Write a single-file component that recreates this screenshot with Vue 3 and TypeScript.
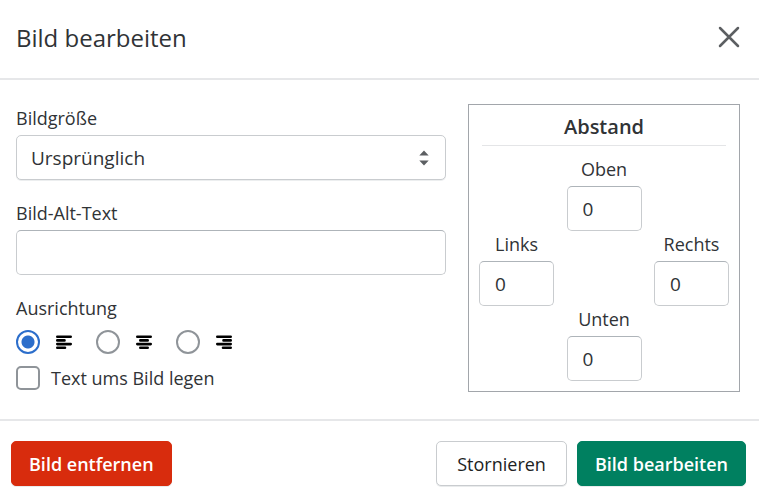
<script setup lang="ts">
import { reactive } from 'vue'

type Align = 'left' | 'center' | 'right'
type Side = 'top' | 'left' | 'right' | 'bottom'

const form = reactive({
  size: 'original',
  alt: '',
  align: 'left' as Align,
  wrap: false,
  spacing: { top: '0', left: '0', right: '0', bottom: '0' } as Record<Side, string>,
})

const alignments: { value: Align; label: string; path: string }[] = [
  { value: 'left', label: 'Links', path: 'M1.3 1.8H14.7M1.3 5.4H8.5M1.3 9.1H14.7M1.3 12.8H9' },
  { value: 'center', label: 'Zentriert', path: 'M1.3 1.8H14.7M4.3 5.4H11.7M1.3 9.1H14.7M4.3 12.8H11.7' },
  { value: 'right', label: 'Rechts', path: 'M1.3 1.8H14.7M7.5 5.4H14.7M1.3 9.1H14.7M7 12.8H14.7' },
]

const sides: { key: Side; label: string }[] = [
  { key: 'top', label: 'Oben' },
  { key: 'left', label: 'Links' },
  { key: 'right', label: 'Rechts' },
  { key: 'bottom', label: 'Unten' },
]
</script>

<template>
  <form class="dialog" role="dialog" aria-labelledby="dialog-title" @submit.prevent>
    <header class="header">
      <h2 id="dialog-title" class="title">Bild bearbeiten</h2>
      <button type="button" class="close" aria-label="Schließen">
        <svg viewBox="0 0 22 22" width="22" height="22" aria-hidden="true">
          <path d="M2 2L20 20M20 2L2 20" fill="none" stroke="#5c5f62" stroke-width="2.5" stroke-linecap="round" />
        </svg>
      </button>
    </header>

    <div class="body">
      <div class="fields">
        <div class="field">
          <label for="size">Bildgröße</label>
          <div class="select-wrap">
            <select id="size" v-model="form.size" class="control">
              <option value="original">Ursprünglich</option>
            </select>
            <svg class="arrows" viewBox="0 0 10 16" width="10" height="16" aria-hidden="true">
              <path d="M5 0.5L9.7 5.5H0.3ZM5 15.5L0.3 10.5H9.7Z" fill="#5c5f62" />
            </svg>
          </div>
        </div>
        <div class="field">
          <label for="alt">Bild-Alt-Text</label>
          <input id="alt" v-model="form.alt" type="text" class="control" />
        </div>
        <fieldset class="alignment">
          <legend>Ausrichtung</legend>
          <div class="radios">
            <label v-for="a in alignments" :key="a.value" class="radio">
              <input v-model="form.align" type="radio" name="align" :value="a.value" :aria-label="a.label" />
              <svg viewBox="0 0 16 15" width="16" height="15" aria-hidden="true">
                <path :d="a.path" fill="none" stroke="#000" stroke-width="2.6" stroke-linecap="round" />
              </svg>
            </label>
          </div>
        </fieldset>
        <label class="check">
          <input v-model="form.wrap" type="checkbox" />
          <span>Text ums Bild legen</span>
        </label>
      </div>

      <section class="spacing" aria-labelledby="spacing-title">
        <h3 id="spacing-title" class="spacing-title">Abstand</h3>
        <div class="sides">
          <div v-for="s in sides" :key="s.key" class="side" :class="s.key">
            <label :for="'space-' + s.key">{{ s.label }}</label>
            <input :id="'space-' + s.key" v-model="form.spacing[s.key]" type="text" inputmode="numeric" class="control" />
          </div>
        </div>
      </section>
    </div>

    <footer class="footer">
      <button type="button" class="btn danger">Bild entfernen</button>
      <div class="actions">
        <button type="button" class="btn">Stornieren</button>
        <button type="submit" class="btn primary">Bild bearbeiten</button>
      </div>
    </footer>
  </form>
</template>

<style>
body {
  margin: 0;
  background: #fff;
}
</style>

<style scoped>
.dialog,
.dialog * {
  box-sizing: border-box;
}

.dialog {
  font-family: 'Segoe UI', 'Open Sans', 'Noto Sans', sans-serif;
  font-size: 18px;
  line-height: 26px;
  color: #303336;
}

.header {
  display: flex;
  align-items: flex-start;
  justify-content: space-between;
  padding: 20px 15px 22px 16px;
  border-bottom: 2px solid #e6e7e9;
}

.title {
  margin: 0;
  font-size: 24px;
  line-height: 36px;
  font-weight: 400;
}

.close {
  display: flex;
  padding: 6px 4px;
  border: 0;
  background: none;
}

.body {
  display: flex;
  align-items: flex-start;
  gap: 22px;
  padding: 24px 19px 27px 16px;
}

.fields {
  flex: 1;
  min-width: 0;
  padding-top: 1px;
}

.field {
  display: flex;
  flex-direction: column;
  gap: 4px;
  margin-bottom: 20px;
}

.control {
  display: block;
  width: 100%;
  height: 45px;
  margin: 0;
  padding: 0 15px;
  border: 1px solid #c9cccf;
  border-top-color: #aeb4b9;
  border-radius: 5px;
  background: #fff;
  color: inherit;
  font: inherit;
  font-size: 19px;
}

.select-wrap {
  position: relative;
}

select.control {
  appearance: none;
  padding: 0 14px;
  border-color: #c9cccf;
  box-shadow: 0 1px 0 #eceeef;
}

.arrows {
  position: absolute;
  top: 15px;
  right: 17px;
  pointer-events: none;
}

.alignment {
  margin: 0;
  padding: 0;
  border: 0;
}

.alignment legend {
  padding: 0;
}

.radios {
  display: flex;
  gap: 24px;
  padding: 9px 0 11px;
}

.radio,
.check {
  display: flex;
  align-items: center;
}

.radio {
  gap: 16px;
}

.check {
  gap: 11px;
}

.radio input,
.check input {
  flex: none;
  appearance: none;
  width: 24px;
  height: 24px;
  margin: 0;
  border: 2px solid #8f9499;
  background: #fff;
}

.radio input {
  border-radius: 50%;
}

.radio input:checked {
  border-color: #2c6ecb;
  background: radial-gradient(circle, #2c6ecb 6px, #fff 7px);
}

.check input {
  border-radius: 5px;
}

.check input:checked {
  border-color: #2c6ecb;
  background: #2c6ecb;
}

.spacing {
  flex: none;
  width: 272px;
  padding: 9px 10px 10px;
  border: 1px solid #a2a6ab;
}

.spacing-title {
  margin: 0 3px 10px;
  padding-bottom: 5px;
  border-bottom: 1px solid #e4e5e7;
  font-size: 20px;
  line-height: 26px;
  font-weight: 600;
  text-align: center;
}

.sides {
  display: grid;
  grid-template: repeat(3, auto) / 75px 1fr 75px;
}

.side {
  display: flex;
  flex-direction: column;
  gap: 4px;
  text-align: center;
}

.top,
.bottom {
  grid-column: 2;
  justify-self: center;
  width: 75px;
}

.top {
  grid-row: 1;
}

.left {
  grid-area: 2 / 1;
}

.right {
  grid-area: 2 / 3;
}

.bottom {
  grid-row: 3;
}

.footer {
  display: flex;
  align-items: center;
  justify-content: space-between;
  padding: 20px 13px 16px 11px;
  border-top: 2px solid #e6e7e9;
}

.actions {
  display: flex;
  gap: 10px;
}

.btn {
  height: 45px;
  padding: 0 20px;
  border: 1px solid #c9cccf;
  border-radius: 5px;
  background: #fff;
  box-shadow: 0 1px 0 #e9ebec;
  color: #202223;
  font: inherit;
  font-weight: 500;
}

.danger,
.primary {
  padding: 0 17px;
  color: #fff;
  font-weight: 600;
}

.danger {
  border-color: #d82c0d;
  background: #d82c0d;
}

.primary {
  border-color: #008060;
  background: #008060;
}
</style>
